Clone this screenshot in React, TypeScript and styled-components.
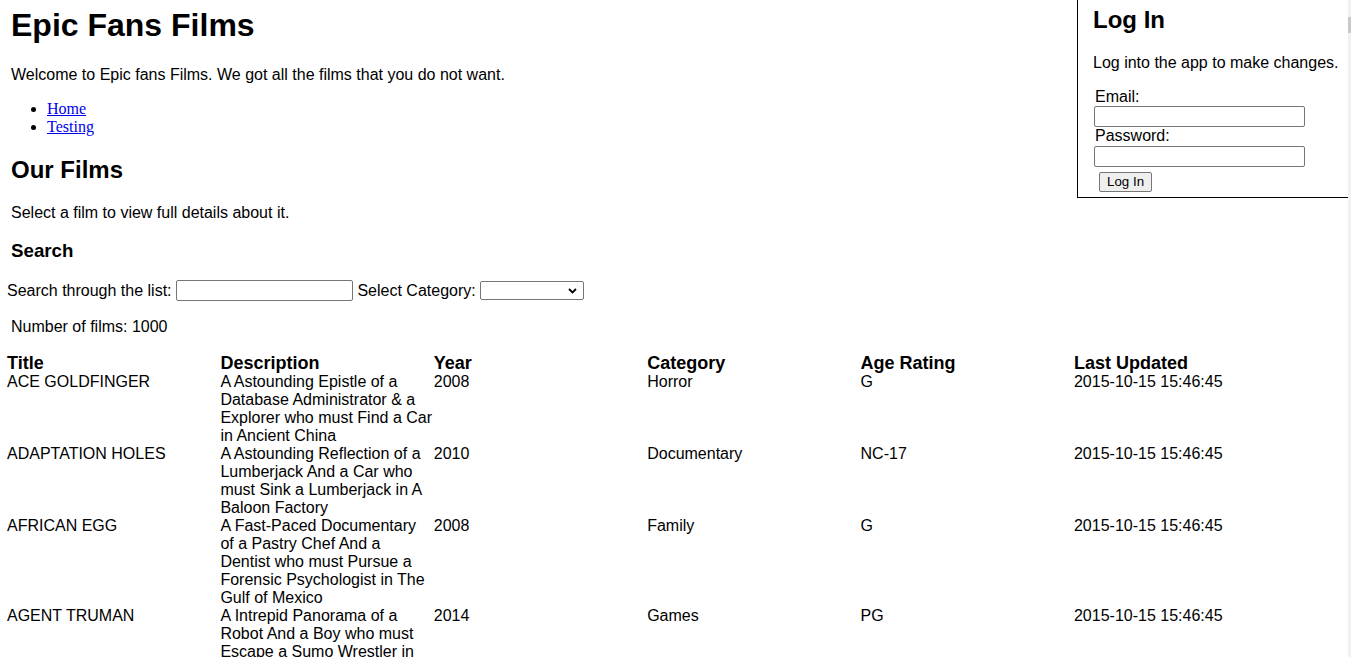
import React from "react";
import styled, { createGlobalStyle } from "styled-components";

const GlobalStyle = createGlobalStyle`
  html, body {
    margin: 0;
    padding: 0;
    overflow: hidden;
    background: #ffffff;
  }
  body {
    font-family: "Liberation Sans", Arial, sans-serif;
    font-size: 16px;
    color: #000000;
  }
`;

const Page = styled.div`
  display: flow-root;
  margin-right: 3px;
  padding-left: 7px;
`;

const LoginPanel = styled.aside`
  float: right;
  width: 255px;
  padding: 6px 0 5px 15px;
  border-left: 1px solid #000000;
  border-bottom: 1px solid #000000;
`;

const PanelTitle = styled.h2`
  margin: 0 0 19.92px;
  font-size: 24px;
  font-weight: bold;
`;

const Paragraph = styled.p<{ $indent?: number; $after?: number }>`
  margin: 0 0 ${(p) => p.$after ?? 16}px;
  padding-left: ${(p) => p.$indent ?? 0}px;
  font-size: 16px;
`;

const LoginForm = styled.form`
  display: flex;
  flex-direction: column;
  align-items: flex-start;
  padding-left: 1px;
`;

const FieldLabel = styled.label`
  padding-left: 1px;
  line-height: 18.4px;
`;

const TextInput = styled.input<{ $width: number }>`
  box-sizing: border-box;
  width: ${(p) => p.$width}px;
  height: 21px;
  margin: 0;
  padding: 1px 2px;
  border: 1px solid #767676;
  border-radius: 2px;
  background: #ffffff;
  font-family: "Liberation Sans", Arial, sans-serif;
  font-size: 13.33px;
`;

const Button = styled.button`
  box-sizing: border-box;
  height: 20px;
  margin: 5px 0 0 5px;
  padding: 0 7px;
  border: 1px solid #767676;
  border-radius: 2px;
  background: #efefef;
  color: #000000;
  font-family: "Liberation Sans", Arial, sans-serif;
  font-size: 13.33px;
`;

const Title = styled.h1`
  margin: 6.5px 0 22.44px 4px;
  font-size: 32px;
  font-weight: bold;
`;

const NavList = styled.ul`
  margin: 0 0 19px;
  padding-left: 40px;
  font-family: "Liberation Serif", "Times New Roman", serif;
  font-size: 16px;
  line-height: 18.4px;
`;

const NavLink = styled.a`
  color: #0000ee;
  text-decoration: underline;
`;

const SectionTitle = styled.h2`
  margin: 0 0 19.92px 4px;
  font-size: 24px;
  font-weight: bold;
`;

const SubTitle = styled.h3`
  margin: 0 0 18.72px 4px;
  font-size: 18.72px;
  font-weight: bold;
  line-height: 20px;
`;

const SearchRow = styled.div`
  display: flex;
  align-items: center;
  gap: 4.45px;
  height: 21px;
`;

const SelectWrap = styled.span`
  position: relative;
  display: inline-flex;
`;

const Select = styled.select`
  box-sizing: border-box;
  appearance: none;
  width: 104px;
  height: 19px;
  margin: 0;
  padding: 0 20px 0 4px;
  border: 1px solid #767676;
  border-radius: 2px;
  background: #ffffff;
  font-family: "Liberation Sans", Arial, sans-serif;
  font-size: 13.33px;
`;

const Chevron = styled.svg`
  position: absolute;
  right: 7px;
  top: 7px;
  pointer-events: none;
`;

const Count = styled.p`
  margin: 17px 0 16px 4px;
  line-height: 18.4px;
`;

const FilmTable = styled.table`
  table-layout: fixed;
  width: 1280.4px;
  border-collapse: collapse;
  border-spacing: 0;
`;

const HeadCell = styled.th`
  padding: 0;
  text-align: left;
  vertical-align: top;
  font-size: 18px;
  font-weight: bold;
  line-height: 20.7px;
`;

const Cell = styled.td`
  padding: 0;
  vertical-align: top;
  font-size: 16px;
  line-height: 18px;
`;

const ScrollTrack = styled.div`
  position: fixed;
  top: 0;
  right: 0;
  bottom: 0;
  width: 3px;
  background: #f1f1f1;
`;

const ScrollThumb = styled.div`
  margin-top: 17px;
  height: 16px;
  width: 3px;
  background: #c8c8c8;
`;

const films = [
  {
    title: "ACE GOLDFINGER",
    description:
      "A Astounding Epistle of a Database Administrator & a Explorer who must Find a Car in Ancient China",
    year: "2008",
    category: "Horror",
    rating: "G",
  },
  {
    title: "ADAPTATION HOLES",
    description:
      "A Astounding Reflection of a Lumberjack And a Car who must Sink a Lumberjack in A Baloon Factory",
    year: "2010",
    category: "Documentary",
    rating: "NC-17",
  },
  {
    title: "AFRICAN EGG",
    description:
      "A Fast-Paced Documentary of a Pastry Chef And a Dentist who must Pursue a Forensic Psychologist in The Gulf of Mexico",
    year: "2008",
    category: "Family",
    rating: "G",
  },
  {
    title: "AGENT TRUMAN",
    description:
      "A Intrepid Panorama of a Robot And a Boy who must Escape a Sumo Wrestler in Ancient China",
    year: "2014",
    category: "Games",
    rating: "PG",
  },
  {
    title: "AIRPLANE SIERRA",
    description:
      "A Touching Saga of a Hunter And a Butler who must Discover a Butler in A Jet Boat",
    year: "2011",
    category: "Comedy",
    rating: "PG-13",
  },
];

export default function App() {
  return (
    <>
      <GlobalStyle />
      <Page>
        <LoginPanel>
          <PanelTitle>Log In</PanelTitle>
          <Paragraph>Log into the app to make changes.</Paragraph>
          <LoginForm onSubmit={(e) => e.preventDefault()}>
            <FieldLabel htmlFor="email">Email:</FieldLabel>
            <TextInput id="email" type="text" $width={211} />
            <FieldLabel htmlFor="password">Password:</FieldLabel>
            <TextInput id="password" type="password" $width={211} />
            <Button type="submit">Log In</Button>
          </LoginForm>
        </LoginPanel>

        <Title>Epic Fans Films</Title>
        <Paragraph $indent={4}>
          Welcome to Epic fans Films. We got all the films that you do not want.
        </Paragraph>
        <NavList>
          <li>
            <NavLink href="#">Home</NavLink>
          </li>
          <li>
            <NavLink href="#">Testing</NavLink>
          </li>
        </NavList>

        <SectionTitle>Our Films</SectionTitle>
        <Paragraph $indent={4} $after={19.72}>
          Select a film to view full details about it.
        </Paragraph>
        <SubTitle>Search</SubTitle>

        <SearchRow>
          <label htmlFor="search">Search through the list:</label>
          <TextInput id="search" type="text" $width={177} />
          <label htmlFor="category">Select Category:</label>
          <SelectWrap>
            <Select id="category" defaultValue="">
              <option value=""></option>
              <option value="horror">Horror</option>
              <option value="documentary">Documentary</option>
            </Select>
            <Chevron width="9" height="6" viewBox="0 0 9 6">
              <path
                d="M1 1 L4.5 4.5 L8 1"
                fill="none"
                stroke="#000"
                strokeWidth="1.8"
              />
            </Chevron>
          </SelectWrap>
        </SearchRow>

        <Count>Number of films: 1000</Count>

        <FilmTable>
          <thead>
            <tr>
              <HeadCell>Title</HeadCell>
              <HeadCell>Description</HeadCell>
              <HeadCell>Year</HeadCell>
              <HeadCell>Category</HeadCell>
              <HeadCell>Age Rating</HeadCell>
              <HeadCell>Last Updated</HeadCell>
            </tr>
          </thead>
          <tbody>
            {films.map((f) => (
              <tr key={f.title}>
                <Cell>{f.title}</Cell>
                <Cell>{f.description}</Cell>
                <Cell>{f.year}</Cell>
                <Cell>{f.category}</Cell>
                <Cell>{f.rating}</Cell>
                <Cell>2015-10-15 15:46:45</Cell>
              </tr>
            ))}
          </tbody>
        </FilmTable>
      </Page>
      <ScrollTrack>
        <ScrollThumb />
      </ScrollTrack>
    </>
  );
}
